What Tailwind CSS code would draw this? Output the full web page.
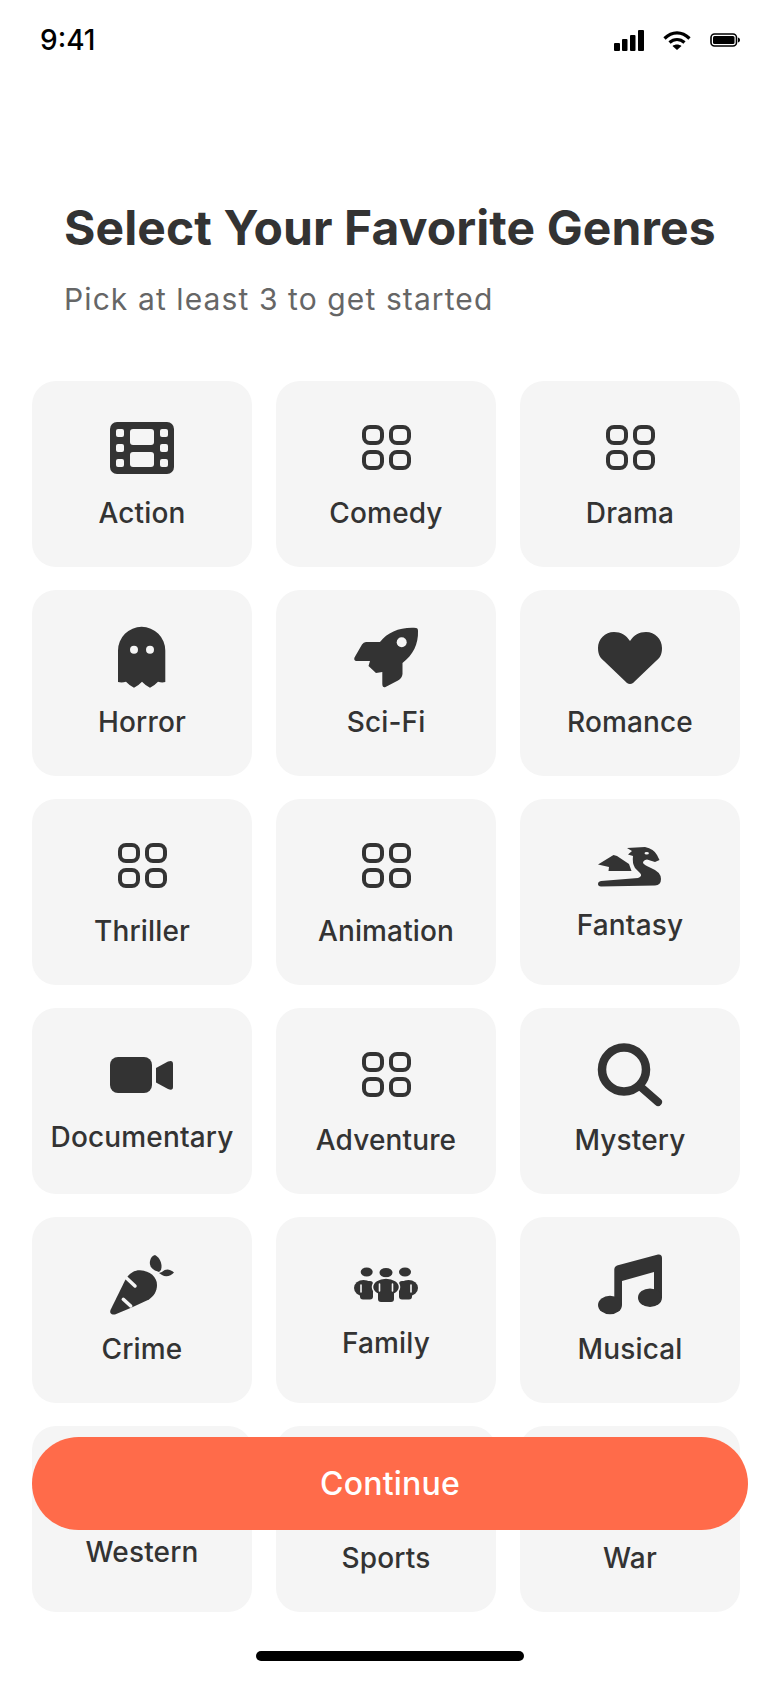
<!DOCTYPE html>
<html lang="en">
<head>
    <meta charset="UTF-8">
    <meta name="viewport" content="width=device-width, initial-scale=1.0">
    <title>Select Genres</title>
    <script src="https://cdn.jsdelivr.net/npm/@tailwindcss/browser@4"></script>
</head>
<body class="bg-white font-['Inter',sans-serif] text-[#333]">
    <div class="relative w-[780px] h-[1688px] overflow-hidden bg-white">

        <!-- Status bar -->
        <div class="flex items-center justify-between h-[80px] pl-[40px] pr-[40px]">
            <span class="text-[28px] font-medium text-black">9:41</span>
            <div class="flex items-center gap-[19px]">
                <svg width="30" height="21" viewBox="0 0 30 21" fill="#000">
                    <rect x="0" y="13" width="6" height="8" rx="1"/>
                    <rect x="8" y="9" width="5.5" height="12" rx="1"/>
                    <rect x="16" y="5" width="5.5" height="16" rx="1"/>
                    <rect x="24" y="0" width="6" height="21" rx="1"/>
                </svg>
                <svg width="28" height="19" viewBox="0 0 28 19" fill="none" stroke="#000" stroke-width="3.2">
                    <path d="M1.5 7.5C9 0 19 0 26.5 7.5"/>
                    <path d="M6.5 11.5C11 7.5 17 7.5 21.5 11.5"/>
                    <path d="M14 19L9.5 15C12 13 16 13 18.5 15Z" fill="#000" stroke="none"/>
                </svg>
                <svg width="30" height="14" viewBox="0 0 30 14" fill="none">
                    <rect x="1" y="1" width="25.5" height="12" rx="3.5" stroke="#000" stroke-width="1.6"/>
                    <rect x="3" y="3" width="21.5" height="8" rx="1.5" fill="#000"/>
                    <path d="M28 4.5C29.5 5 30 6 30 7C30 8 29.5 9 28 9.5Z" fill="#000"/>
                </svg>
            </div>
        </div>

        <!-- Heading -->
        <div class="px-[64px] pt-[120px]">
            <h1 class="text-[48px] leading-[56px] font-bold tracking-[0.1px]">Select Your Favorite Genres</h1>
            <p class="mt-[21px] text-[30px] leading-[44px] tracking-[1.1px] text-[#666]">Pick at least 3 to get started</p>
        </div>

        <!-- Genres -->
        <div class="grid grid-cols-[repeat(3,220px)] auto-rows-[186px] gap-x-[24px] gap-y-[23px] pl-[32px] mt-[60px]">
            <div class="flex flex-col items-center justify-center gap-[17px] rounded-[24px] bg-[#f5f5f5]">
                <svg width="68" height="60" viewBox="0 0 68 60">
                    <rect x="2" y="3" width="64" height="52" rx="7" fill="#333"/>
                    <g fill="#f5f5f5">
                        <rect x="8" y="10" width="8" height="8" rx="2"/>
                        <rect x="8" y="25" width="8" height="8" rx="2"/>
                        <rect x="8" y="40" width="8" height="8" rx="2"/>
                        <rect x="52" y="10" width="8" height="8" rx="2"/>
                        <rect x="52" y="25" width="8" height="8" rx="2"/>
                        <rect x="52" y="40" width="8" height="8" rx="2"/>
                        <rect x="22" y="10" width="24" height="16" rx="3"/>
                        <rect x="22" y="33" width="24" height="15" rx="3"/>
                    </g>
                </svg>
                <span class="text-[28px] leading-[34px] font-[450] tracking-[0.15px]">Action</span>
            </div>
            <div class="flex flex-col items-center justify-center gap-[17px] rounded-[24px] bg-[#f5f5f5]">
                <svg width="68" height="60" viewBox="0 0 68 60" fill="none" stroke="#333" stroke-width="4">
                    <rect x="12" y="8" width="18" height="16" rx="6"/>
                    <rect x="39" y="8" width="18" height="16" rx="6"/>
                    <rect x="12" y="33" width="18" height="16" rx="6"/>
                    <rect x="39" y="33" width="18" height="16" rx="6"/>
                </svg>
                <span class="text-[28px] leading-[34px] font-[450] tracking-[0.15px]">Comedy</span>
            </div>
            <div class="flex flex-col items-center justify-center gap-[17px] rounded-[24px] bg-[#f5f5f5]">
                <svg width="68" height="60" viewBox="0 0 68 60" fill="none" stroke="#333" stroke-width="4">
                    <rect x="12" y="8" width="18" height="16" rx="6"/>
                    <rect x="39" y="8" width="18" height="16" rx="6"/>
                    <rect x="12" y="33" width="18" height="16" rx="6"/>
                    <rect x="39" y="33" width="18" height="16" rx="6"/>
                </svg>
                <span class="text-[28px] leading-[34px] font-[450] tracking-[0.15px]">Drama</span>
            </div>

            <div class="flex flex-col items-center justify-center gap-[17px] rounded-[24px] bg-[#f5f5f5]">
                <svg class="overflow-visible" width="68" height="60" viewBox="0 0 68 60">
                    <path fill="#333" d="M10 22.5A23.6 23.6 0 0 1 57.3 22.5V54Q54 55 50 53.7Q46 58 42 59.7Q38 58 34 53.7Q30 58 26 59.7Q22 58 18 53.7Q14 55 10 54Z"/>
                    <circle cx="26" cy="21.7" r="4" fill="#f5f5f5"/>
                    <circle cx="42" cy="21.7" r="4" fill="#f5f5f5"/>
                </svg>
                <span class="text-[28px] leading-[34px] font-[450] tracking-[0.15px]">Horror</span>
            </div>
            <div class="flex flex-col items-center justify-center gap-[17px] rounded-[24px] bg-[#f5f5f5]">
                <svg class="overflow-visible" width="68" height="60" viewBox="0 0 68 60">
                    <path fill="#333" d="M64 0Q66 0 66 3C66.5 16 61 27 50.5 35V46Q50 50 46 52.5L33.5 59Q30.5 60 30.3 56V44L24 45L16.5 38L18 33H4Q1.5 32 2.5 29.5L10 16.5Q11.5 14 14 14H28C36 4 48 -1 64 0Z"/>
                    <circle cx="49.7" cy="14.3" r="5" fill="#f5f5f5"/>
                </svg>
                <span class="text-[28px] leading-[34px] font-[450] tracking-[0.15px]">Sci-Fi</span>
            </div>
            <div class="flex flex-col items-center justify-center gap-[17px] rounded-[24px] bg-[#f5f5f5]">
                <svg width="68" height="60" viewBox="0 0 68 60">
                    <path fill="#333" d="M34 13C30 7 25 4 18 4C9 4 2 11 2 20C2 26 4 30 8 33L31 55Q34 57 37 55L60 33C64 30 66 26 66 20C66 11 59 4 50 4C43 4 38 7 34 13Z"/>
                </svg>
                <span class="text-[28px] leading-[34px] font-[450] tracking-[0.15px]">Romance</span>
            </div>

            <div class="flex flex-col items-center justify-center gap-[17px] rounded-[24px] bg-[#f5f5f5]">
                <svg width="68" height="60" viewBox="0 0 68 60" fill="none" stroke="#333" stroke-width="4">
                    <rect x="12" y="8" width="18" height="16" rx="6"/>
                    <rect x="39" y="8" width="18" height="16" rx="6"/>
                    <rect x="12" y="33" width="18" height="16" rx="6"/>
                    <rect x="39" y="33" width="18" height="16" rx="6"/>
                </svg>
                <span class="text-[28px] leading-[34px] font-[450] tracking-[0.15px]">Thriller</span>
            </div>
            <div class="flex flex-col items-center justify-center gap-[17px] rounded-[24px] bg-[#f5f5f5]">
                <svg width="68" height="60" viewBox="0 0 68 60" fill="none" stroke="#333" stroke-width="4">
                    <rect x="12" y="8" width="18" height="16" rx="6"/>
                    <rect x="39" y="8" width="18" height="16" rx="6"/>
                    <rect x="12" y="33" width="18" height="16" rx="6"/>
                    <rect x="39" y="33" width="18" height="16" rx="6"/>
                </svg>
                <span class="text-[28px] leading-[34px] font-[450] tracking-[0.15px]">Animation</span>
            </div>
            <div class="flex flex-col items-center justify-center gap-[17px] rounded-[24px] bg-[#f5f5f5]">
                <svg width="68" height="48" viewBox="0 0 68 48">
                    <path fill="#333" d="M31 5L49 4Q58 6 61 12L63.5 17L59 19L51 16.5Q47 17 47 20Q48 22 55 25Q65 29 65 36Q65 42 59 42.5L5 43.5Q2 43 2 41Q2 38.5 5 38L42 35Q47 33 44 30L39 25Q36 20 37 13L32 11.5L36 8Z"/>
                    <path fill="#333" d="M2 21.5L17.5 12L21 13L33 21L35.5 28L12.5 28L13 24Z"/>
                    <ellipse cx="50.7" cy="10.3" rx="2.2" ry="1.2" fill="#f5f5f5"/>
                </svg>
                <span class="text-[28px] leading-[34px] font-[450] tracking-[0.15px]">Fantasy</span>
            </div>

            <div class="flex flex-col items-center justify-center gap-[17px] rounded-[24px] bg-[#f5f5f5]">
                <svg width="68" height="54" viewBox="0 0 68 54" fill="#333">
                    <rect x="2" y="8" width="42" height="36" rx="8"/>
                    <path d="M48 19L60 12.5Q65 10.5 65 15V38Q65 42 60 40L48 33.5Z"/>
                </svg>
                <span class="text-[28px] leading-[34px] font-[450] tracking-[0.15px]">Documentary</span>
            </div>
            <div class="flex flex-col items-center justify-center gap-[17px] rounded-[24px] bg-[#f5f5f5]">
                <svg width="68" height="60" viewBox="0 0 68 60" fill="none" stroke="#333" stroke-width="4">
                    <rect x="12" y="8" width="18" height="16" rx="6"/>
                    <rect x="39" y="8" width="18" height="16" rx="6"/>
                    <rect x="12" y="33" width="18" height="16" rx="6"/>
                    <rect x="39" y="33" width="18" height="16" rx="6"/>
                </svg>
                <span class="text-[28px] leading-[34px] font-[450] tracking-[0.15px]">Adventure</span>
            </div>
            <div class="flex flex-col items-center justify-center gap-[17px] rounded-[24px] bg-[#f5f5f5]">
                <svg class="overflow-visible" width="68" height="60" viewBox="0 0 68 60" fill="none" stroke="#333" stroke-linecap="round">
                    <circle cx="28" cy="23.5" r="22" stroke-width="8.5"/>
                    <path d="M45.7 41.7L62 56" stroke-width="8"/>
                </svg>
                <span class="text-[28px] leading-[34px] font-[450] tracking-[0.15px]">Mystery</span>
            </div>

            <div class="flex flex-col items-center justify-center gap-[17px] rounded-[24px] bg-[#f5f5f5]">
                <svg width="68" height="60" viewBox="0 0 68 60">
                    <path fill="#333" d="M2.5 55L17 25.5C21 18 27 15 32 15.3C42 16 49 22 49 30C49 36 46 41 41 44.5L23.7 52.5L7 59.5C3 60 1.5 58 2.5 55Z"/>
                    <path d="M18.7 23.3L27 31M15.3 44.3L22.7 51" stroke="#f5f5f5" stroke-width="3.5" stroke-linecap="round" fill="none"/>
                    <path fill="#333" d="M47 0C51 2 55 8 53 15L51 17C44 15 41 11 42 6Q43 1 47 0Z"/>
                    <path fill="#333" d="M54 17C58 13 62 14 66 17.5C63 21 58 22.5 54 20L51 18Z"/>
                </svg>
                <span class="text-[28px] leading-[34px] font-[450] tracking-[0.15px]">Crime</span>
            </div>
            <div class="flex flex-col items-center justify-center gap-[17px] rounded-[24px] bg-[#f5f5f5]">
                <svg width="68" height="48" viewBox="0 0 68 48" fill="#333">
                    <ellipse cx="14.7" cy="11" rx="6" ry="4.5"/>
                    <ellipse cx="34" cy="11.7" rx="6.5" ry="4.8"/>
                    <ellipse cx="53" cy="11" rx="6" ry="4.5"/>
                    <ellipse cx="11.5" cy="27" rx="9.5" ry="8"/>
                    <rect x="8" y="20" width="13" height="18.5" rx="3"/>
                    <ellipse cx="56.5" cy="27" rx="9.5" ry="8"/>
                    <rect x="47" y="20" width="13" height="18.5" rx="3"/>
                    <ellipse cx="34" cy="26" rx="13.5" ry="9" stroke="#f5f5f5" stroke-width="1.5"/>
                    <rect x="26" y="20" width="16" height="21" rx="3"/>
                    <path d="M9 24V31M27.5 23V30M40.5 23V30M59 24V31" stroke="#f5f5f5" stroke-width="1.6" stroke-linecap="round"/>
                </svg>
                <span class="text-[28px] leading-[34px] font-[450] tracking-[0.15px]">Family</span>
            </div>
            <div class="flex flex-col items-center justify-center gap-[17px] rounded-[24px] bg-[#f5f5f5]">
                <svg class="overflow-visible" width="68" height="60" viewBox="0 0 68 60" fill="#333">
                    <path d="M21 10.5L62 -0.5Q66 -1 66 3V43H58V17L26 26V50H18.3V14Q18.3 11.5 21 10.5Z"/>
                    <ellipse cx="54" cy="42.7" rx="12" ry="9.3"/>
                    <ellipse cx="14" cy="50" rx="12" ry="9.3"/>
                </svg>
                <span class="text-[28px] leading-[34px] font-[450] tracking-[0.15px]">Musical</span>
            </div>

            <!-- last row icons sit behind the button -->
            <div class="flex flex-col items-center justify-center gap-[17px] rounded-[24px] bg-[#f5f5f5]">
                <div class="h-[48px]"></div>
                <span class="text-[28px] leading-[34px] font-[450] tracking-[0.15px]">Western</span>
            </div>
            <div class="flex flex-col items-center justify-center gap-[17px] rounded-[24px] bg-[#f5f5f5]">
                <div class="h-[60px]"></div>
                <span class="text-[28px] leading-[34px] font-[450] tracking-[0.15px]">Sports</span>
            </div>
            <div class="flex flex-col items-center justify-center gap-[17px] rounded-[24px] bg-[#f5f5f5]">
                <div class="h-[60px]"></div>
                <span class="text-[28px] leading-[34px] font-[450] tracking-[0.15px]">War</span>
            </div>
        </div>

        <!-- Continue button floats over the last row -->
        <button class="absolute left-[32px] top-[1437px] flex items-center justify-center w-[716px] h-[93px] rounded-[47px] bg-[#ff6b4a] text-[32px] font-[450] tracking-[0.2px] text-white">Continue</button>

        <!-- Home indicator -->
        <div class="absolute left-[256px] top-[1651px] w-[268px] h-[10px] rounded-full bg-black"></div>
    </div>
</body>
</html>
